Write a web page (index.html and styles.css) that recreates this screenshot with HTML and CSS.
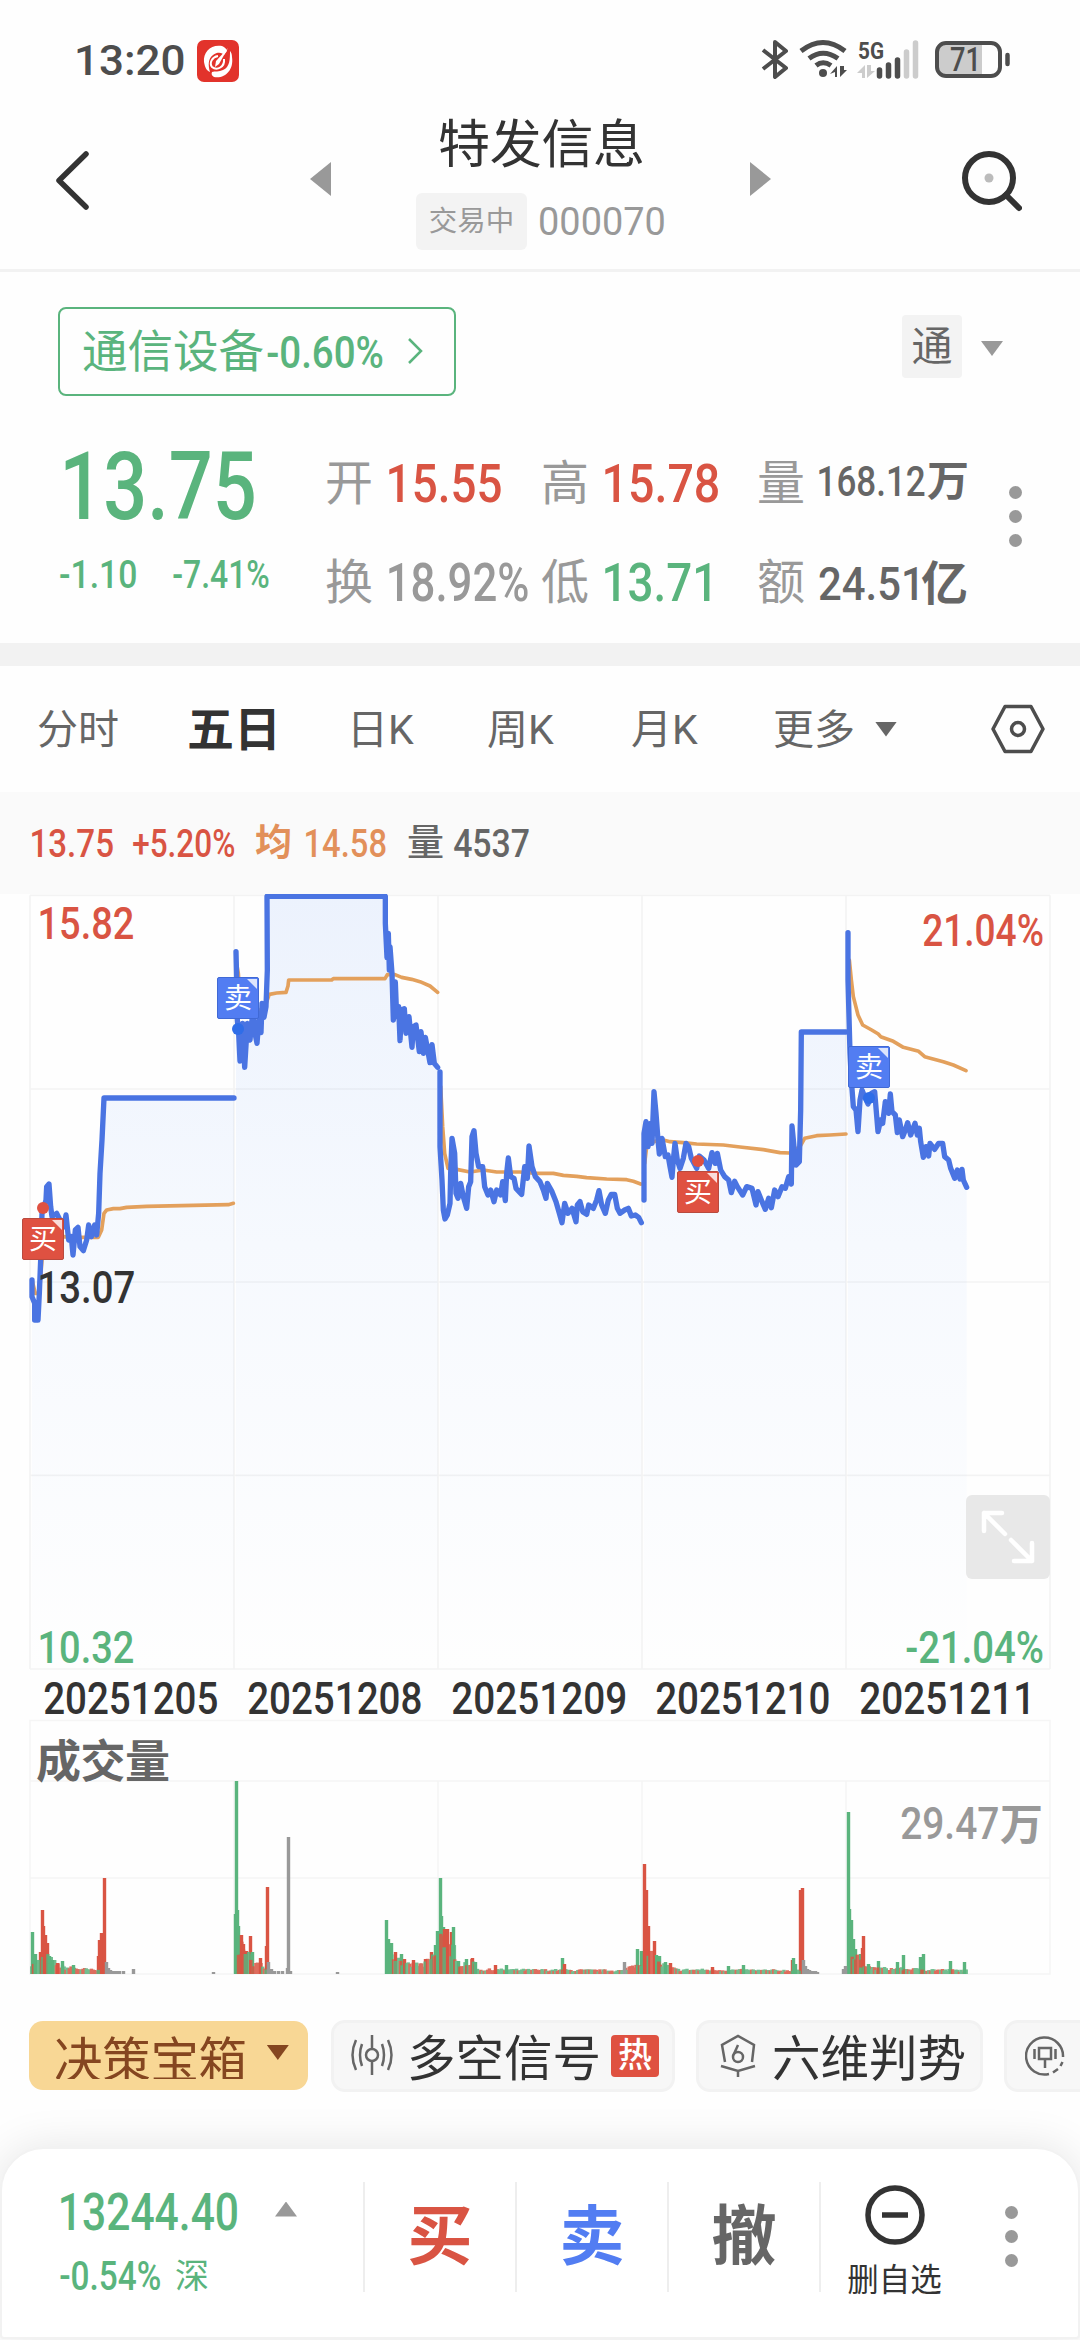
FILE: index.html
```html
<!DOCTYPE html>
<html lang="zh-CN">
<head>
<meta charset="utf-8">
<title>特发信息 000070</title>
<link rel="stylesheet" href="styles.css">
</head>
<body>
<div class="screen">
  <div class="status">
    <span class="num clock" data-w="107">13:20</span>
    <svg class="app-icon" width="42" height="42" viewBox="0 0 42 42"><rect width="42" height="42" rx="7" fill="#e2332b"/><path d="M25 6C14 4 6 12 7 22C8 28 10 31 13 32C11 25 11 19 16 15C21 11 26 13 27 15L30 11C29 8 27 7 25 6Z" fill="#fff"/><path d="M17 37C28 39 37 30 35 17C35 14 34 12 33 11C33 19 33 27 26 30C22 32 18 31 15 32C14 34 15 36 17 37Z" fill="#fff"/><path d="M31 8L22 24L18 27L19 21Z" fill="#fff"/><path d="M21 16C15 17 12 23 15 27C20 31 28 27 27 19" fill="none" stroke="#fff" stroke-width="2"/></svg>
    <svg class="sys" width="260" height="46" viewBox="757 36 260 46" fill="none" stroke="#4d4d4d">
      <path d="M762 50L785 68L774 77V42L785 51L762 69" stroke-width="4" stroke-linejoin="round"/>
      <path d="M800 51Q822 34 844 51M808 58.500Q822 48 837 58.500M815 65.500Q822 60 830 65.500" stroke-width="5"/>
      <circle cx="822" cy="73" r="4" fill="#4d4d4d" stroke="none"/>
      <path d="M829 74L836 66V77H834V72ZM839 66V77L846 70H843V66Z" fill="#4d4d4d" stroke="none"/>
      <path d="M856 73L864 65V78H861V73ZM866 65V78L874 71H870V65Z" fill="#ccc" stroke="none"/>
      <path d="M878.500 70V76M887.500 65V76M896.500 60V76" stroke-width="5.500" stroke-linecap="round"/>
      <path d="M905.500 52V76M914.500 43V76" stroke="#ccc" stroke-width="5.500" stroke-linecap="round"/>
      <text class="net" x="857" y="59" textLength="26" lengthAdjust="spacingAndGlyphs">5G</text>
      <path d="M946 43H981V76H946Q936 76 936 66V53Q936 43 946 43Z" fill="#ccc" stroke="none"/>
      <rect x="936" y="43" width="63" height="33" rx="9" stroke-width="4"/>
      <path d="M1006.500 55V64" stroke-width="4.500" stroke-linecap="round"/>
      <text class="batt" x="949" y="71" textLength="31" lengthAdjust="spacingAndGlyphs">71</text>
    </svg>
  </div>

  <header class="head">
    <svg class="back" width="36" height="62" viewBox="54 149 36 62"><path d="M86 154L59 180.500L86 207" fill="none" stroke="#333" stroke-width="5.500" stroke-linecap="round" stroke-linejoin="round"/></svg>
    <svg class="prev" width="22" height="36" viewBox="0 0 22 36"><path d="M21 1V35L0 18Z" fill="#999"/></svg>
    <div class="title">
      <h1>特发信息</h1>
      <div class="code"><span class="state">交易中</span><span class="num" data-w="124">000070</span></div>
    </div>
    <svg class="next" width="22" height="36" viewBox="0 0 22 36"><path d="M1 1V35L22 18Z" fill="#999"/></svg>
    <svg class="search" width="62" height="64" viewBox="960 149 62 64"><circle cx="989" cy="178" r="24" fill="none" stroke="#333" stroke-width="6"/><circle cx="989" cy="178" r="4.500" fill="#bbb"/><path d="M1006 195L1019 208" stroke="#333" stroke-width="6" stroke-linecap="round"/></svg>
  </header>

  <section class="quote">
    <div class="sector-row">
      <div class="sector"><span class="name">通信设备</span><span class="num" data-w="116">-0.60%</span><svg width="16" height="28" viewBox="0 0 16 28"><path d="M2 2L14 14L2 26" fill="none" stroke="currentColor" stroke-width="2.500"/></svg></div>
      <span class="tong">通</span>
      <i class="tri"></i>
    </div>
    <div class="stats">
      <span class="num price" data-w="189">13.75</span>
      <span class="lab">开</span><span class="num big red" data-w="112">15.55</span>
      <span class="lab">高</span><span class="num big red" data-w="113">15.78</span>
      <span class="lab">量</span><span class="amount vol"><span class="num" data-w="106">168.12</span><b>万</b></span>
      <span class="change"><span class="num" data-w="76">-1.10</span><span class="num" data-w="96">-7.41%</span></span>
      <span class="lab">换</span><span class="num big gray" data-w="139">18.92%</span>
      <span class="lab">低</span><span class="num big green" data-w="105">13.71</span>
      <span class="lab">额</span><span class="amount turnover"><span class="num" data-w="98">24.51</span><b>亿</b></span>
      <div class="dots"><i></i><i></i><i></i></div>
    </div>
  </section>

  <nav class="tabs">
    <span>分时</span><span class="on">五日</span><span>日K</span><span>周K</span><span>月K</span><span>更多</span><i class="tri dark"></i>
    <svg width="56" height="52" viewBox="-28 -26 56 52" fill="none" stroke="#4d4d4d" stroke-width="3.500"><path d="M-13 -22.500H13L25 0L13 22.500H-13L-25 0Z" stroke-linejoin="round"/><circle r="6.500"/></svg>
  </nav>

  <div class="legend">
    <span class="num red" data-w="81">13.75</span><span class="num red" data-w="101">+5.20%</span><b class="orange">均</b><span class="num orange" data-w="80">14.58</span><b>量</b><span class="num" data-w="75">4537</span>
  </div>

  <section class="chart">
    <svg id="price" width="1080" height="780" viewBox="0 42 3240 2340"></svg>
    <span class="num tag red" id="hi" data-w="93">15.82</span>
    <span class="num tag red" id="hip" data-w="120">21.04%</span>
    <span class="num tag" id="mid" data-w="94">13.07</span>
    <span class="num tag green" id="lo" data-w="93">10.32</span>
    <span class="num tag green" id="lop" data-w="137">-21.04%</span>
    <i class="pin buy" id="b1"></i><i class="pin sell" id="s1"></i><i class="pin buy" id="b2"></i><i class="pin sell" id="s2"></i>
    <span class="flag buy" id="fb1">买</span><span class="flag sell" id="fs1">卖</span><span class="flag buy" id="fb2">买</span><span class="flag sell" id="fs2">卖</span>
    <span class="expand"><svg width="84" height="84" viewBox="0 0 84 84" fill="none" stroke="#fff" stroke-width="4.500" stroke-linecap="round" stroke-linejoin="round"><path d="M18 36V18H36M18 18L39 39M45 45L66 66M48 66H66V48"/></svg></span>
  </section>
  <div class="dates">
    <span class="num" data-w="173">20251205</span><span class="num" data-w="173">20251208</span><span class="num" data-w="173">20251209</span><span class="num" data-w="173">20251210</span><span class="num" data-w="168">20251211</span>
  </div>
  <section class="volume">
    <svg id="bars" width="1080" height="256" viewBox="0 1719 1080 256"></svg>
    <b class="vname">成交量</b>
    <span class="vmax"><span class="num" data-w="97">29.47</span><b>万</b></span>
  </section>

  <div class="tools">
    <div class="pill gold"><span>决策宝箱</span><i class="tri"></i></div>
    <div class="pill signal"><svg width="44" height="42" viewBox="-22 -21 44 42" fill="none" stroke="#666" stroke-width="2.500"><circle r="6"/><path d="M0 -20V-6M0 6V20M-10 -11Q-14 0 -10 11M10 -11Q14 0 10 11M-16 -15Q-23 0 -16 15M16 -15Q23 0 16 15"/></svg><span>多空信号</span><em>热</em></div>
    <div class="pill six"><svg width="38" height="44" viewBox="718 2034 38 44" fill="none" stroke="#666" stroke-width="2.500"><path d="M724 2062L721 2045L737 2036L753 2045L751 2062M720 2066L737 2071L754 2066M737 2071V2077"/><circle cx="737" cy="2057" r="5"/><path d="M737 2045L732.500 2055"/></svg><span>六维判势</span></div>
    <div class="pill last"><svg width="40" height="40" viewBox="-20 -20 40 40" fill="none" stroke="#666" stroke-width="2.500"><path d="M4 18A18.500 18.500 0 1 1 18 1M17.500 6L15.500 10M13 13L8 16.500M-6 -8H6V3H-6ZM0 3V12M-10.500 -7V3M10.500 -7V3"/></svg></div>
  </div>

  <footer class="bar">
    <div class="index"><div><span class="num idx" data-w="176">13244.40</span><i class="tri up"></i></div><div class="idx-sub"><span class="num" data-w="100">-0.54%</span><span class="city">深</span></div></div>
    <div class="act red">买</div><div class="act blue">卖</div><div class="act">撤</div>
    <div class="del"><svg width="62" height="62" viewBox="-31 -31 62 62" fill="none" stroke="#333" stroke-width="5.500"><circle r="27"/><path d="M-13 0H13"/></svg><span>删自选</span></div>
    <div class="dots"><i></i><i></i><i></i></div>
  </footer>
</div>
<script src="script.js"></script>
</body>
</html>
```
FILE: styles.css
```css
* { box-sizing: border-box; }
body { margin: 0; background: #fefefe; font-family: Roboto, "Noto Sans CJK SC", sans-serif; color: #666; }
i, em { font-style: normal; }
svg { display: block; flex: none; }
.screen { width: 1080px; height: 2340px; overflow: hidden; position: relative; display: flex; flex-direction: column; }
.screen > * { flex: none; }
.num { display: block; flex: none; white-space: nowrap; transform-origin: 0 50%; font-weight: 500; }
.red { color: #d95443; }
.green { color: #5ab47d; }
.gray { color: #999; }
.orange { color: #e2905a; }
.blue { color: #527df2; }
.tri { flex: none; width: 22px; height: 15px; background: #999; clip-path: polygon(0 0, 100% 0, 50% 100%); }
.tri.dark { background: #666; }
.tri.up { clip-path: polygon(50% 0, 100% 100%, 0 100%); }

.status { height: 112px; display: flex; padding: 36px 62px 0 77px; align-items: flex-start; }
.clock { font-size: 43px; line-height: 48px; color: #4d4d4d; }
.app-icon { margin: 4px 0 0 13px; }
.sys { margin-left: auto; }
.sys text { stroke: none; fill: #4d4d4d; }
.net { font-size: 24px; font-weight: 700; }
.batt { font-size: 33px; font-weight: 500; }

.head { height: 160px; border-bottom: 3px solid #f2f2f2; display: flex; padding-left: 54px; }
.back { margin-top: 37px; }
.prev { margin: 49px 0 0 220px; }
.title { width: 250px; margin-left: 84px; }
.title h1 { margin: 6px 0 0 22px; font-size: 52px; line-height: 56px; font-weight: 400; color: #333; white-space: nowrap; letter-spacing: -.3px; }
.code { display: flex; margin-top: 19px; height: 57px; align-items: center; font-size: 39px; color: #999; }
.code .num { font-weight: 400; }
.state { width: 111px; height: 57px; margin-right: 13px; line-height: 57px; text-align: center; background: #f3f3f3; border-radius: 6px; font-size: 28.500px; }
.next { margin: 49px 0 0 83px; }
.search { margin: 37px 0 0 189px; }

.quote { height: 394px; border-bottom: 23px solid #f2f2f2; padding-top: 35px; }
.sector-row { display: flex; padding-left: 58px; height: 128px; }
.sector { width: 398px; height: 89px; border: 2px solid #5ab47d; border-radius: 8px; color: #5ab47d; display: flex; align-items: center; font-size: 45.500px; line-height: 80px; padding: 0 0 2px 22px; white-space: nowrap; }
.sector .name { margin-top: 5px; }
.sector .num { margin: 5px 0 0 3px; font-size: 45px; }
.sector svg { margin-left: 24px; }
.tong { margin: 8px 0 0 446px; width: 60px; height: 63px; line-height: 64px; text-align: center; background: #f3f3f3; border-radius: 4px; font-size: 41px; }
.sector-row .tri { margin: 34px 0 0 19px; }
.stats { position: relative; padding-left: 60px; display: grid; grid-template-columns: 265px 64px 152px 64px 152px 62px 150px; grid-template-rows: 100px 99px; align-items: center; }
.stats .lab { font-size: 48px; line-height: 60px; color: #999; margin-bottom: 3px; }
.big { font-size: 54px; line-height: 60px; margin-bottom: 3px; }
.price { font-size: 94px; line-height: 100px; color: #5ab47d; margin: 3px 0 0 5px; }
.change { display: flex; gap: 37px; color: #5ab47d; font-size: 38px; margin-bottom: 20px; }
.amount { display: flex; align-items: center; line-height: 60px; height: 60px; white-space: nowrap; }
.vol { font-size: 42px; margin-bottom: 6px; }
.vol .num { margin-right: 2px; }
.turnover { font-size: 47px; margin-bottom: 2px; }
.turnover .num { margin-right: 4px; }
.dots { display: flex; flex-direction: column; gap: 11px; }
.dots i { width: 13px; height: 13px; border-radius: 50%; background: #999; }
.stats .dots { position: absolute; left: 1009px; top: 51px; }

.tabs { height: 126px; display: flex; align-items: center; padding-left: 37px; font-size: 41px; line-height: 60px; white-space: nowrap; }
.tabs span { margin-top: 1px; }
.tabs span:nth-child(1) { width: 150px; }
.tabs .on { font-size: 47px; font-weight: 700; color: #333; width: 160px; }
.tabs span:nth-child(3) { width: 140px; }
.tabs span:nth-child(4) { width: 144px; }
.tabs span:nth-child(5) { width: 142px; }
.tabs span:nth-child(6) { width: 102px; }
.tabs svg { margin-left: 93px; }

.legend { height: 102px; background: #fafafa; display: flex; align-items: center; padding: 0 0 0 32px; font-size: 39px; line-height: 50px; }
.legend b { font-size: 37px; width: 37px; margin: 2px 14px 0 21px; font-weight: 700; }
.legend .num { margin-top: 1px; }
.legend b + .num + b { margin-right: 10px; font-weight: 500; }
.legend .num + .num { margin-left: 20px; }

.chart { position: relative; height: 780px; }
.tag { position: absolute; font-size: 45px; line-height: 50px; }
#hi { left: 40px; top: 5px; }
#hip { left: 923px; top: 12px; }
#mid { left: 40px; top: 369px; color: #333; }
#lo { left: 40px; top: 729px; }
#lop { left: 906px; top: 729px; }
.flag { position: absolute; width: 42px; height: 42px; border: 1px solid #b94a3e; border-radius: 2px; color: #fff; font-size: 28px; line-height: 41px; text-align: center; }
.flag::after { content: ""; position: absolute; right: 1px; top: 1px; width: 10px; height: 10px; background: #fffc; clip-path: polygon(0 0, 100% 0, 100% 100%); }
.flag.buy { background: #df5141; }
.flag.sell { background: #527df2; border-color: #4069d5; }
.pin { position: absolute; width: 12px; height: 12px; border-radius: 50%; background: #df5141; }
.pin.sell { background: #2f6de8; }
#b1 { left: 37px; top: 308px; }
#s1 { left: 232px; top: 129px; }
#b2 { left: 692px; top: 261px; }
#s2 { left: 863px; top: 198px; }
#fb1 { left: 22px; top: 324px; }
#fs1 { left: 217px; top: 83px; }
#fb2 { left: 677px; top: 277px; }
#fs2 { left: 848px; top: 152px; }
.expand { position: absolute; left: 966px; top: 601px; width: 84px; height: 84px; background: #e8e8e8; border-radius: 6px; }
.dates { height: 45px; padding: 0 30px; display: grid; grid-template-columns: repeat(5, 204px); align-items: center; font-size: 45px; line-height: 45px; color: #333; }
.dates .num { margin: 2px 0 0 14px; }
.volume { position: relative; height: 256px; }
.vname { position: absolute; left: 36px; top: 16px; font-size: 45px; line-height: 56px; letter-spacing: -.5px; }
.vmax { position: absolute; left: 901px; top: 75px; display: flex; align-items: center; font-size: 43px; line-height: 56px; color: #999; gap: 2px; }
.vmax .num { font-size: 45px; }
.vmax b { margin-top: 3px; }

.tools { height: 172px; padding: 45px 0 0 29px; display: flex; align-items: flex-start; white-space: nowrap; overflow: hidden; }
.pill { flex: none; height: 72px; display: flex; align-items: center; background: #f7f7f7; border: 3px solid #f2f2f2; border-radius: 14px; font-size: 48.500px; line-height: 60px; color: #333; }
.pill span { margin-top: 7px; }
.gold { width: 279px; height: 69px; margin: 1px 23px 0 0; border: 0; background: #f8d795; color: #854620; padding-left: 25px; }
.gold span { height: 58px; line-height: 81px; margin-top: -12px; overflow: hidden; letter-spacing: -.3px; }
.gold .tri { background: #854620; margin: -6px 0 0 20px; }
.signal { width: 344px; margin-right: 21px; padding-left: 16px; }
.signal svg { margin: -2px 13px 0 0; }
.signal em { margin: 0 0 0 10px; width: 48px; height: 42px; line-height: 41px; border-radius: 4px; background: #df5141; color: #fff; font-size: 34px; text-align: center; font-weight: 500; }
.six { width: 287px; margin-right: 21px; padding-left: 20px; }
.six svg { margin: 0 15px 0 0; }
.last { width: 200px; padding-left: 18px; }

.bar { height: 192px; border: 2px solid #f2f2f2; border-radius: 44px 44px 4px 4px; background: #fff; box-shadow: 0 0 44px #0000001a; display: flex; padding-top: 33px; }
.index { width: 361px; padding-left: 59px; color: #5ab47d; }
.index > div { display: flex; align-items: center; height: 60px; }
.idx { font-size: 52px; }
.index .tri { margin: -6px 0 0 38px; background: #999; }
.index .idx-sub { font-size: 34px; height: 48px; margin: 9px 0 0 -1px; gap: 15px; }
.idx-sub .num { font-size: 40px; margin-top: 2px; }
.city { margin-top: -3px; }
.act { width: 152px; height: 110px; border-left: 2px solid #eee; font-size: 65px; line-height: 111px; font-weight: 700; text-align: center; }
.del { width: 152px; height: 110px; border-left: 2px solid #eee; display: flex; flex-direction: column; align-items: center; font-size: 31.500px; line-height: 40px; color: #333; }
.del svg { margin: 2px 0 15px -3px; }
.del span { margin-left: -3px; }
.bar .dots { margin: 24px 0 0 34px; }
```
FILE: script.js
```js
// Squeeze each numeral run so its ink spans data-w pixels.
var ctx = document.createElement('canvas').getContext('2d');
document.querySelectorAll('.num').forEach(function (el) {
  var cs = getComputedStyle(el), w = +el.dataset.w;
  ctx.font = cs.fontWeight + ' ' + cs.fontSize + ' ' + cs.fontFamily;
  var m = ctx.measureText(el.textContent);
  var left = -m.actualBoundingBoxLeft, ink = m.actualBoundingBoxRight + m.actualBoundingBoxLeft;
  el.style.width = w + 'px';
  el.style.transform = 'scaleX(' + w / ink + ') translateX(' + left * -1 + 'px)';
});

// Price chart: one entry per trading day, in thirds of a pixel.
var days = [
  { dx: 0,
    p: '96,1200 96,1250 104,1270 104,1320 114,1320 118,1240 122,1140 126,1000 130,990 138,960 140,920 147,912 152,980 156,1010 170,1000 180,1020 192,1040 198,1005 206,1080 214,1070 219,1125 226,1050 234,1042 240,1100 250,1112 260,1080 266,1035 274,1070 284,1035 290,1065 296,1000 300,880 306,780 312,654 702,654',
    a: '96,1200 106,1240 118,1240 130,1090 190,1070 240,1072 295,1072 305,1050 312,1000 320,990 340,986 360,986 380,982 440,979 580,976 685,974 700,970' },
  { dx: 0,
    p: '708,215 710,300 712,420 716,460 720,543 728,430 734,562 742,430 750,480 758,400 764,455 771,490 778,400 783,458 786,370 792,412 798,380 802,270 801,49 1156,49 1156,130 1161,233 1165,160 1168,270 1170,200 1176,280 1180,420 1186,306 1190,410 1196,380 1200,482 1205,390 1213,386 1218,460 1227,410 1236,502 1240,440 1248,435 1258,515 1263,455 1270,520 1276,472 1290,548 1296,494 1303,550 1313,562',
    a: '708,240 715,280 722,390 790,390 802,360 808,343 830,339 858,337 864,318 866,300 995,300 1000,296 1155,296 1162,284 1185,284 1205,292 1235,298 1260,305 1290,318 1313,337' },
  { dx: 1260,
    p: '60,576 60,800 66,900 70,990 75,1017 82,1005 90,970 92,880 96,775 104,820 108,940 114,955 122,910 130,950 140,985 146,920 152,905 156,770 162,752 168,820 176,860 188,860 194,920 204,945 212,930 222,965 230,930 242,945 248,905 256,962 260,880 265,834 272,890 282,895 288,925 305,943 314,860 322,895 327,798 336,860 346,890 360,905 370,930 378,955 382,910 396,935 408,965 418,1000 426,1028 434,970 444,1000 456,985 468,1025 472,975 480,965 488,995 500,1003 506,975 520,985 530,960 537,932 545,975 556,1000 565,960 574,943 584,943 592,985 600,1000 614,990 625,985 634,1008 646,1005 656,1012 664,1028',
    a: '62,620 68,740 74,820 84,865 110,868 150,876 190,870 230,876 300,876 350,880 400,880 430,886 470,889 500,893 560,897 620,899 640,904 662,912' },
  { dx: 1890,
    p: '42,960 42,760 48,725 54,800 62,730 66,790 72,635 78,700 84,780 88,822 96,775 106,830 114,825 120,860 126,892 130,840 135,790 142,840 150,865 160,835 168,790 176,800 184,835 200,865 208,828 222,840 236,865 246,818 256,850 262,820 272,870 284,890 296,900 304,938 314,904 322,920 338,945 350,920 366,925 378,975 384,935 396,965 406,988 416,955 424,983 434,930 444,950 456,920 466,925 476,890 484,912 486,738 492,800 498,855 508,845 512,690 514,456 648,456',
    a: '44,850 50,800 70,785 100,780 120,785 160,788 200,792 280,795 330,801 400,809 450,818 478,819 510,800 524,775 560,767 600,765 648,762' },
  { dx: 1890,
    p: '654,158 654,300 660,520 664,600 670,680 678,690 684,755 690,660 696,630 704,650 714,672 724,640 734,635 744,755 752,720 758,730 766,665 776,700 781,642 786,695 796,705 802,758 808,720 818,770 826,750 833,728 842,765 855,730 862,765 868,745 872,785 880,832 888,800 896,828 900,790 914,808 926,790 938,790 944,830 956,840 962,865 974,895 982,870 990,897 996,868 1000,900 1010,922',
    a: '658,240 664,300 670,350 684,405 698,435 725,450 745,462 752,470 790,484 820,502 866,514 884,530 940,545 970,555 1008,572' }
];
var out = '<defs><linearGradient id="g" gradientUnits="userSpaceOnUse" x1="0" y1="46" x2="0" y2="2367"><stop offset="0" stop-color="#ecf2fd"/><stop offset=".45" stop-color="#f6f9fe"/><stop offset="1" stop-color="#fefefe"/></linearGradient></defs>';
days.forEach(function (d) {
  var pts = d.p.split(' '), x0 = pts[0].split(',')[0], x1 = pts[pts.length - 1].split(',')[0];
  out += '<path transform="translate(' + d.dx + ')" fill="url(#g)" d="M' + x0 + ',2367L' + pts.join('L') + 'L' + x1 + ',2367Z"/>';
});
var grid = '';
[90, 702, 1314, 1926, 2538, 3150].forEach(function (x) { grid += 'M' + x + ' 46V2367'; });
[46, 627, 1206, 1786, 2367].forEach(function (y) { grid += 'M90 ' + y + 'H3150'; });
out += '<path d="' + grid + '" stroke="#000" stroke-opacity=".045" stroke-width="5" fill="none"/>';
['a', 'p'].forEach(function (k) {
  days.forEach(function (d) {
    out += '<polyline transform="translate(' + d.dx + ')" points="' + d[k] + '" fill="none" stroke-linecap="round" stroke-linejoin="round" stroke="' + (k === 'a' ? '#e3a05c' : '#4a74e2') + '" stroke-width="' + (k === 'a' ? 11 : 16) + '"/>';
  });
});
document.getElementById('price').innerHTML = out;

// Volume: spans of low trading [from, to, height at start, height at end], then single peaks.
var colors = { g: '#5ab47d', r: '#d95443', n: '#999' };
var spans = [[31, 42, 14, 14], [42, 60, 22, 8], [60, 98, 8, 4], [236, 250, 34, 18], [250, 266, 14, 8], [386, 404, 26, 12], [404, 425, 10, 11], [425, 440, 12, 28], [440, 454, 40, 26], [454, 475, 13, 13], [475, 625, 5, 4], [625, 642, 6, 16], [644, 658, 26, 14], [658, 676, 12, 5], [676, 799, 5, 4], [848, 860, 36, 14], [860, 967, 7, 4]];
var peaks = '32,42,g 35,20,g 40,22,r 42,64,r 43,48,r 45,39,r 47,31,r 49,18,g 52,14,g 57,11,r 62,13,g 73,9,g 98,18,r 99,34,r 101,41,r 104,96,r 106,12,n 108,6,n 110,4,n 113,3,n 116,3,n 119,3,n 123,3,n 133,5,n 213,2,n 235,60,g 236,193,g 237,64,g 238,48,g 241,39,r 243,30,r 246,23,r 250,38,r 252,22,g 260,16,r 266,28,r 267,87,r 268,12,n 271,5,n 274,3,n 278,3,n 282,3,n 287,6,n 288,137,n 290,3,n 337,2,n 386,54,g 388,35,g 391,31,g 395,22,r 401,20,g 404,15,r 413,14,r 425,15,r 431,22,r 435,29,g 437,43,g 440,96,g 441,58,g 443,47,g 444,45,r 447,45,r 451,42,r 453,47,g 458,13,g 466,15,g 472,16,r 475,12,g 495,9,r 506,9,g 562,16,g 564,10,r 624,12,n 637,25,g 641,23,g 644,110,r 646,84,r 648,48,r 654,33,r 656,19,g 659,18,g 665,12,g 670,11,r 712,7,r 728,8,g 743,9,g 792,14,r 793,16,g 795,10,g 800,84,r 802,86,r 803,14,n 805,8,n 807,5,n 809,4,n 812,3,n 815,3,n 817,2,n 843,5,n 845,8,n 848,162,g 849,65,g 851,54,g 853,35,g 855,25,g 860,20,g 862,26,r 863,38,r 868,10,g 878,13,g 897,12,g 903,19,g 920,17,g 923,20,g 950,13,g 964,12,g';
var bars = '<path d="M30 1720.500H1050V1974H30ZM30 1781H1050M30 1878H1050M234 1781V1974M438 1781V1974M642 1781V1974M846 1781V1974" fill="none" stroke="#f5f5f5" stroke-width="1.500"/>';
function bar(x, h, c) { bars += '<path d="M' + x + ' 1974V' + (1974 - h) + '" stroke="' + colors[c] + '" stroke-width="3.400"/>'; }
peaks = peaks.split(' ').map(function (s) { return s.split(','); });
peaks.forEach(function (p) { if (p[1] > 12) bar(+p[0] + .5, +p[1], p[2]); });
var seed = 7;
function rnd() { seed = (seed * 16807) % 2147483647; return seed / 2147483647; }
bars += '<g opacity=".85">';
spans.forEach(function (s) {
  for (var x = s[0]; x < s[1]; x += 1.7) {
    var h = s[2] + (s[3] - s[2]) * (x - s[0]) / (s[1] - s[0]);
    bar(x + .8, h * (.55 + rnd() * .6), rnd() > .5 ? 'g' : 'r');
  }
});
bars += '</g>';
peaks.forEach(function (p) { if (p[1] <= 12) bar(+p[0] + .5, +p[1], p[2]); });
document.getElementById('bars').innerHTML = bars;
```
